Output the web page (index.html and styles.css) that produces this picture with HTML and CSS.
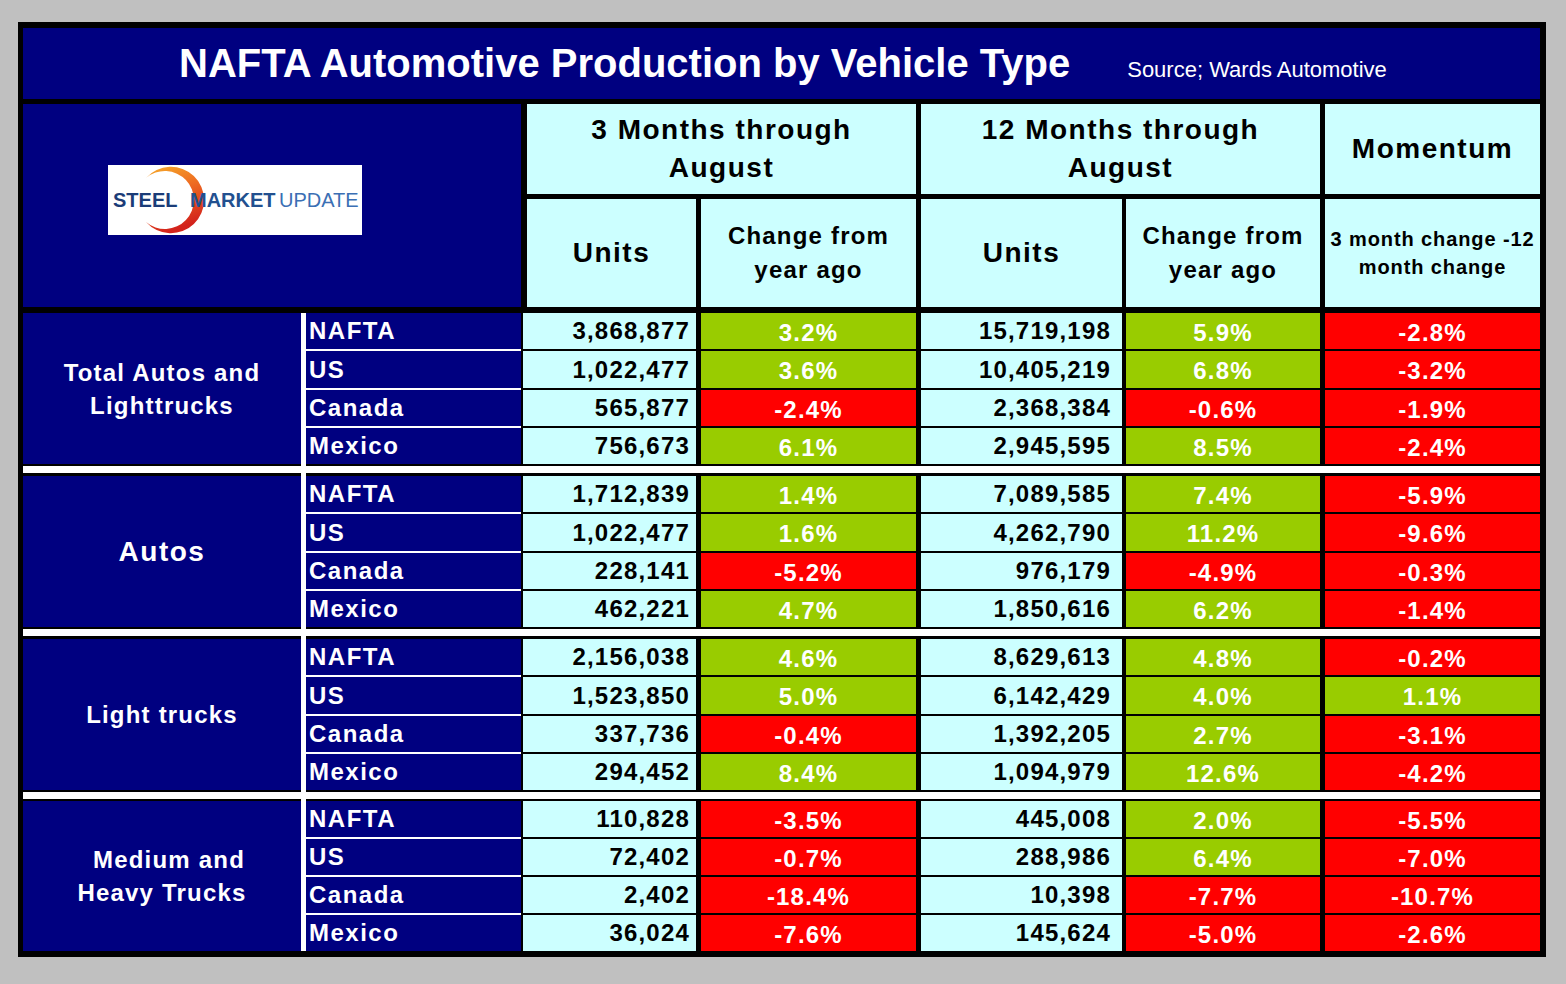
FILE: index.html
```html
<!DOCTYPE html>
<html>
<head>
<meta charset="utf-8">
<title>NAFTA Automotive Production by Vehicle Type</title>
<link rel="stylesheet" href="styles.css">
</head>
<body>
<div class="frame">
  <div class="title-bar">
    <h1 class="title">NAFTA Automotive Production by Vehicle Type</h1>
    <span class="source">Source; Wards Automotive</span>
  </div>

  <div class="header">
    <div class="logo-cell">
      <svg class="logo" width="254" height="70" viewBox="0 0 254 70">
        <defs>
          <linearGradient id="ring" x1="0" y1="0" x2="0.3" y2="1">
            <stop offset="0" stop-color="#f6ab2a"/>
            <stop offset="0.45" stop-color="#ee6b22"/>
            <stop offset="1" stop-color="#d3231c"/>
          </linearGradient>
        </defs>
        <rect width="254" height="70" fill="#fff"/>
        <path d="M38 13 A33.2 33.2 0 1 1 38 57 A29 29 0 1 0 38 13 Z" fill="url(#ring)"/>
        <text y="42" font-family="Liberation Sans, Arial, sans-serif" font-size="20">
          <tspan x="5" font-weight="bold" fill="#1b3c78">STEEL</tspan>
          <tspan x="82" font-weight="bold" fill="#22508f">MARKET</tspan>
          <tspan x="171" font-weight="normal" fill="#3b6fb4">UPDATE</tspan>
        </text>
      </svg>
    </div>
    <div class="hcell span2 b6 h-lg">3 Months through<br>August</div>
    <div class="hcell span2 h-lg">12 Months through<br>August</div>
    <div class="hcell h-lg">Momentum</div>
    <div class="hcell b6 h-lg">Units</div>
    <div class="hcell h-md">Change from<br>year ago</div>
    <div class="hcell h-lg">Units</div>
    <div class="hcell b4 h-md">Change from<br>year ago</div>
    <div class="hcell h-sm">3 month change -12<br>month change</div>
  </div>

  <div class="body">
    <div class="group">
      <div class="glabel"><p class="glabel-text">Total Autos and<br>Lighttrucks</p></div>
      <div class="countries">
        <div class="country">NAFTA</div>
        <div class="country">US</div>
        <div class="country">Canada</div>
        <div class="country">Mexico</div>
      </div>
      <div class="data">
        <div class="cell num u3">3,868,877</div><div class="cell pct g">3.2%</div><div class="cell num u12">15,719,198</div><div class="cell pct g c4">5.9%</div><div class="cell pct r">-2.8%</div>
        <div class="cell num u3">1,022,477</div><div class="cell pct g">3.6%</div><div class="cell num u12">10,405,219</div><div class="cell pct g c4">6.8%</div><div class="cell pct r">-3.2%</div>
        <div class="cell num u3">565,877</div><div class="cell pct r">-2.4%</div><div class="cell num u12">2,368,384</div><div class="cell pct r c4">-0.6%</div><div class="cell pct r">-1.9%</div>
        <div class="cell num u3">756,673</div><div class="cell pct g">6.1%</div><div class="cell num u12">2,945,595</div><div class="cell pct g c4">8.5%</div><div class="cell pct r">-2.4%</div>
      </div>
    </div>
    <div class="sep"></div>
    <div class="group">
      <div class="glabel big"><p class="glabel-text">Autos</p></div>
      <div class="countries">
        <div class="country">NAFTA</div>
        <div class="country">US</div>
        <div class="country">Canada</div>
        <div class="country">Mexico</div>
      </div>
      <div class="data">
        <div class="cell num u3">1,712,839</div><div class="cell pct g">1.4%</div><div class="cell num u12">7,089,585</div><div class="cell pct g c4">7.4%</div><div class="cell pct r">-5.9%</div>
        <div class="cell num u3">1,022,477</div><div class="cell pct g">1.6%</div><div class="cell num u12">4,262,790</div><div class="cell pct g c4">11.2%</div><div class="cell pct r">-9.6%</div>
        <div class="cell num u3">228,141</div><div class="cell pct r">-5.2%</div><div class="cell num u12">976,179</div><div class="cell pct r c4">-4.9%</div><div class="cell pct r">-0.3%</div>
        <div class="cell num u3">462,221</div><div class="cell pct g">4.7%</div><div class="cell num u12">1,850,616</div><div class="cell pct g c4">6.2%</div><div class="cell pct r">-1.4%</div>
      </div>
    </div>
    <div class="sep"></div>
    <div class="group">
      <div class="glabel"><p class="glabel-text">Light trucks</p></div>
      <div class="countries">
        <div class="country">NAFTA</div>
        <div class="country">US</div>
        <div class="country">Canada</div>
        <div class="country">Mexico</div>
      </div>
      <div class="data">
        <div class="cell num u3">2,156,038</div><div class="cell pct g">4.6%</div><div class="cell num u12">8,629,613</div><div class="cell pct g c4">4.8%</div><div class="cell pct r">-0.2%</div>
        <div class="cell num u3">1,523,850</div><div class="cell pct g">5.0%</div><div class="cell num u12">6,142,429</div><div class="cell pct g c4">4.0%</div><div class="cell pct g">1.1%</div>
        <div class="cell num u3">337,736</div><div class="cell pct r">-0.4%</div><div class="cell num u12">1,392,205</div><div class="cell pct g c4">2.7%</div><div class="cell pct r">-3.1%</div>
        <div class="cell num u3">294,452</div><div class="cell pct g">8.4%</div><div class="cell num u12">1,094,979</div><div class="cell pct g c4">12.6%</div><div class="cell pct r">-4.2%</div>
      </div>
    </div>
    <div class="sep sep-thin"></div>
    <div class="group group-last">
      <div class="glabel"><p class="glabel-text"><span class="shift">Medium and</span><br>Heavy Trucks</p></div>
      <div class="countries">
        <div class="country">NAFTA</div>
        <div class="country">US</div>
        <div class="country">Canada</div>
        <div class="country">Mexico</div>
      </div>
      <div class="data">
        <div class="cell num u3">110,828</div><div class="cell pct r">-3.5%</div><div class="cell num u12">445,008</div><div class="cell pct g c4">2.0%</div><div class="cell pct r">-5.5%</div>
        <div class="cell num u3">72,402</div><div class="cell pct r">-0.7%</div><div class="cell num u12">288,986</div><div class="cell pct g c4">6.4%</div><div class="cell pct r">-7.0%</div>
        <div class="cell num u3">2,402</div><div class="cell pct r">-18.4%</div><div class="cell num u12">10,398</div><div class="cell pct r c4">-7.7%</div><div class="cell pct r">-10.7%</div>
        <div class="cell num u3">36,024</div><div class="cell pct r">-7.6%</div><div class="cell num u12">145,624</div><div class="cell pct r c4">-5.0%</div><div class="cell pct r">-2.6%</div>
      </div>
    </div>
  </div>
</div>
</body>
</html>
```

FILE: styles.css
```css
* {
  box-sizing: border-box;
}

body {
  margin: 0;
  background: #c0c0c0;
  font-family: "Liberation Sans", Arial, sans-serif;
  font-weight: bold;
}

.frame {
  width: 1528px;
  margin: 22px 0 0 18px;
  border: 6px solid #000;
  border-left-width: 5px;
  background: #000;
}

/* Title */
.title-bar {
  height: 71px;
  background: #000080;
  display: flex;
  align-items: baseline;
  padding: 15px 0 0 156px;
  color: #fff;
}

.title {
  margin: 0;
  font-size: 40px;
  line-height: 40px;
  letter-spacing: 0;
  font-weight: bold;
}

.source {
  margin-left: 57px;
  font-size: 22px;
  font-weight: normal;
}

/* Header */
.header {
  margin-top: 5px;
  display: grid;
  grid-template-columns: 498px 175px 220px 206px 198px 220px;
  grid-template-rows: 90px 108px;
  row-gap: 5px;
}

.logo-cell {
  grid-column: 1;
  grid-row: 1 / 3;
  background: #000080;
  padding: 61px 0 0 85px;
}

.logo {
  display: block;
}

.hcell {
  background: #ccffff;
  border-left: 5px solid #000;
  color: #000;
  display: flex;
  align-items: center;
  justify-content: center;
  text-align: center;
}

.span2 {
  grid-column: span 2;
}

.b6 {
  border-left-width: 6px;
}

.b4 {
  border-left-width: 4px;
}

.h-lg {
  font-size: 28px;
  line-height: 38px;
  letter-spacing: 1.5px;
}

.h-md {
  font-size: 24px;
  line-height: 34px;
  letter-spacing: 1.2px;
}

.h-sm {
  font-size: 20px;
  line-height: 28px;
  letter-spacing: 0.9px;
}

/* Body */
.body {
  margin-top: 6px;
}

.group {
  display: flex;
  height: 151px;
}

.group-last {
  height: 150px;
}

.glabel {
  width: 278px;
  background: #000080;
  color: #fff;
  display: flex;
  align-items: center;
  justify-content: center;
  font-size: 24px;
  line-height: 33px;
  letter-spacing: 1.2px;
}

.glabel-text {
  margin: 0;
  text-align: center;
}

.glabel.big {
  font-size: 28px;
  letter-spacing: 1.5px;
}

.shift {
  padding-left: 14px;
}

.countries {
  width: 220px;
  background: #fff;
  padding-left: 5px;
  display: grid;
  grid-template-rows: 36px 37px 36px 36px;
  row-gap: 2px;
}

.country {
  background: #000080;
  color: #fff;
  font-size: 24px;
  letter-spacing: 1.5px;
  padding-left: 3px;
  display: flex;
  align-items: center;
}

.data {
  flex: 1;
  display: grid;
  grid-template-columns: 175px 220px 206px 198px 220px;
  grid-template-rows: 36px 37px 36px 36px;
  row-gap: 2px;
  background: #000;
}

.group-last .countries,
.group-last .data {
  grid-template-rows: repeat(4, 36px);
}

.cell {
  border-left: 5px solid #000;
  display: flex;
  align-items: center;
  font-size: 24px;
  letter-spacing: 1.2px;
}

.num {
  background: #ccffff;
  color: #000;
  justify-content: flex-end;
}

.u3 {
  border-left-width: 2px;
  padding-right: 6px;
}

.u12 {
  padding-right: 11px;
}

.pct {
  color: #fff;
  justify-content: center;
  padding-top: 3px;
}

.c4 {
  border-left-width: 4px;
}

.g {
  background-color: #99cc00;
}

.r {
  background-color: #ff0000;
}

.sep {
  height: 12px;
  background:
    linear-gradient(to right, transparent 278px, #fff 278px, #fff 283px, transparent 283px),
    linear-gradient(to bottom, #000 2px, #fff 2px, #fff 9px, #000 9px);
}

.sep-thin {
  height: 11px;
}
```
